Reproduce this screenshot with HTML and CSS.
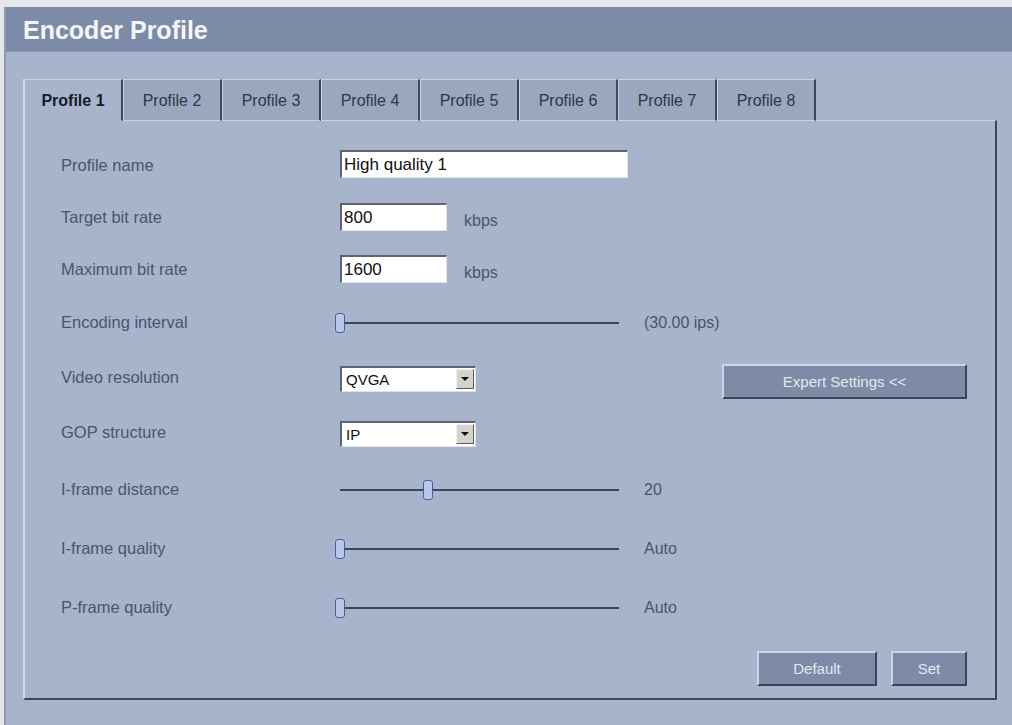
FILE: index.html
```html
<!DOCTYPE html>
<html lang="en">
<head>
    <meta charset="UTF-8">
    <title>Encoder Profile</title>
    <link rel="stylesheet" href="styles.css">
</head>
<body>
<div class="frame">
    <!-- Title bar -->
    <div class="title-bar">Encoder Profile</div>

    <div class="content">
        <!-- Profile tabs -->
        <div class="tabs">
            <div class="tab active">Profile 1</div>
            <div class="tab">Profile 2</div>
            <div class="tab">Profile 3</div>
            <div class="tab">Profile 4</div>
            <div class="tab">Profile 5</div>
            <div class="tab">Profile 6</div>
            <div class="tab">Profile 7</div>
            <div class="tab">Profile 8</div>
        </div>

        <!-- Tab panel -->
        <div class="panel">
            <div class="row text-row">
                <div class="label">Profile name</div>
                <input type="text" class="field wide" value="High quality 1">
            </div>
            <div class="row text-row">
                <div class="label">Target bit rate</div>
                <input type="text" class="field short" value="800">
                <span class="unit">kbps</span>
            </div>
            <div class="row text-row">
                <div class="label">Maximum bit rate</div>
                <input type="text" class="field short" value="1600">
                <span class="unit">kbps</span>
            </div>
            <div class="row">
                <div class="label">Encoding interval</div>
                <div class="slider">
                    <div class="track"></div>
                    <div class="thumb" style="left: 0%"></div>
                </div>
                <span class="value">(30.00 ips)</span>
            </div>
            <div class="row">
                <div class="label">Video resolution</div>
                <div class="select">
                    <span class="select-text">QVGA</span>
                    <span class="select-arrow"></span>
                </div>
                <button class="btn expert">Expert Settings &lt;&lt;</button>
            </div>
            <div class="row">
                <div class="label">GOP structure</div>
                <div class="select">
                    <span class="select-text">IP</span>
                    <span class="select-arrow"></span>
                </div>
            </div>
            <div class="row tall">
                <div class="label">I-frame distance</div>
                <div class="slider">
                    <div class="track"></div>
                    <div class="thumb" style="left: 31.5%"></div>
                </div>
                <span class="value">20</span>
            </div>
            <div class="row tall">
                <div class="label">I-frame quality</div>
                <div class="slider">
                    <div class="track"></div>
                    <div class="thumb" style="left: 0%"></div>
                </div>
                <span class="value">Auto</span>
            </div>
            <div class="row tall">
                <div class="label">P-frame quality</div>
                <div class="slider">
                    <div class="track"></div>
                    <div class="thumb" style="left: 0%"></div>
                </div>
                <span class="value">Auto</span>
            </div>

            <!-- Bottom buttons -->
            <div class="actions">
                <button class="btn default">Default</button>
                <button class="btn set">Set</button>
            </div>
        </div>
    </div>
</div>
</body>
</html>
```

FILE: styles.css
```css
/* General Page Styling */
* {
    margin: 0;
    padding: 0;
    box-sizing: border-box;
    font-family: 'Liberation Sans', Arial, sans-serif;
}

body {
    background: #e4e7ec;
    height: 725px;
    overflow: hidden;
}

/* Outer frame */
.frame {
    margin: 7px 0 0 4px;
    height: 718px;
    background: #a7b4cc;
    border-left: 2px solid #8e9ab0;
}

/* Title bar */
.title-bar {
    height: 45px;
    background: #7c8ca8;
    color: #f4f6fa;
    font-size: 25px;
    font-weight: bold;
    padding: 9px 0 0 17px;
    border-bottom: 1px solid #8b9ab3;
}

.content {
    padding: 27px 0 0 17px;
    width: 991px;
}

/* Tabs */
.tabs {
    display: flex;
    margin-bottom: -1px;
}
.tab {
    width: 99px;
    height: 42px;
    padding-top: 12px;
    text-align: center;
    font-size: 16px;
    color: #2e3749;
    background: #9aa7be;
    border-top: 1px solid #c9d3e3;
    border-left: 1px solid #c9d3e3;
    border-right: 2px solid #3d4759;
    border-bottom: 1px solid #c9d3e3;
}
.tab.active {
    width: 100px;
    font-weight: bold;
    color: #151b28;
    background: #a7b4cc;
    border-bottom-color: #a7b4cc;
    border-left: 2px solid #d3dbe8;
}

/* Panel */
.panel {
    height: 580px;
    padding: 18px 28px 0 36px;
    background: #a7b4cc;
    border-top: 1px solid #c9d3e3;
    border-left: 2px solid #d3dbe8;
    border-right: 2px solid #3d4759;
    border-bottom: 2px solid #3d4759;
}

/* Rows */
.row {
    display: flex;
    align-items: center;
    height: 55px;
}
.row.text-row {
    height: 52px;
}
.row.tall {
    height: 59px;
}
.label {
    width: 279px;
    font-size: 16.5px;
    color: #4a566b;
}
.unit,
.value {
    font-size: 16px;
    color: #4a566b;
}
.unit {
    margin-left: 17px;
    padding-top: 8px;
}
.value {
    margin-left: 25px;
}

/* Text fields */
.field {
    height: 28px;
    padding: 0 2px;
    font-size: 17px;
    color: #111;
    background: #fff;
    border-top: 2px solid #5e6470;
    border-left: 2px solid #5e6470;
    border-right: 1px solid #dde2ea;
    border-bottom: 1px solid #dde2ea;
    outline: none;
}
.field.wide {
    width: 288px;
    margin-top: -2px;
}
.field.short {
    width: 107px;
}

/* Slider */
.slider {
    position: relative;
    width: 279px;
    height: 22px;
    display: flex;
    align-items: center;
}
.track {
    width: 100%;
    height: 2px;
    background: #3c4659;
}
.thumb {
    position: absolute;
    top: 1px;
    width: 10px;
    height: 20px;
    margin-left: -5px;
    border: 1px solid #46609a;
    border-radius: 3px;
    background: #b9c8e8;
}

/* Dropdown */
.select {
    width: 136px;
    height: 26px;
    margin-top: 2px;
    display: flex;
    align-items: center;
    background: #fff;
    border-top: 2px solid #5e6470;
    border-left: 2px solid #5e6470;
    border-right: 1px solid #dde2ea;
    border-bottom: 1px solid #dde2ea;
}
.select-text {
    flex: 1;
    padding-left: 4px;
    font-size: 15px;
    color: #111;
}
.select-arrow {
    width: 18px;
    height: 20px;
    margin-right: 1px;
    background: #d6d3cc;
    border-top: 1px solid #f2f2f2;
    border-left: 1px solid #f2f2f2;
    border-right: 1px solid #55585e;
    border-bottom: 1px solid #55585e;
    display: flex;
    align-items: center;
    justify-content: center;
}
.select-arrow::after {
    content: "";
    border-left: 4px solid transparent;
    border-right: 4px solid transparent;
    border-top: 4px solid #111;
}

/* Buttons */
.btn {
    height: 35px;
    font-size: 15px;
    color: #e3e8f1;
    background: #7d8ba6;
    border-top: 2px solid #cbd4e3;
    border-left: 2px solid #cbd4e3;
    border-right: 2px solid #394457;
    border-bottom: 2px solid #394457;
    cursor: pointer;
}
.btn.expert {
    width: 245px;
    margin-left: auto;
    margin-top: 8px;
}
.actions {
    display: flex;
    justify-content: flex-end;
    gap: 14px;
    margin-top: 14px;
}
.btn.default {
    width: 120px;
}
.btn.set {
    width: 76px;
}
```
